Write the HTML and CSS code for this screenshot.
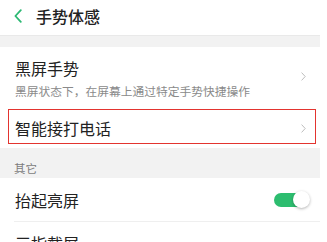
FILE: index.html
```html
<!DOCTYPE html>
<html lang="zh-CN">
<head>
<meta charset="utf-8">
<link rel="stylesheet" href="styles.css">
</head>
<body>
<div class="page">
  <header class="header">
    <svg class="back" width="8" height="14" viewBox="0 0 8 14"><path d="M6.8 1.2 L1.4 7 L6.8 12.8" fill="none" stroke="#2cb873" stroke-width="1.8" stroke-linecap="round" stroke-linejoin="round"/></svg>
    <span class="title">手势体感</span>
  </header>
  <div class="band"></div>
  <div class="item item-tall">
    <div class="texts">
      <div class="item-title">黑屏手势</div>
      <div class="item-sub">黑屏状态下，在屏幕上通过特定手势快捷操作</div>
    </div>
    <svg class="chev" width="5" height="9" viewBox="0 0 5 9"><path d="M0.6 0.6 L4.2 4.5 L0.6 8.4" fill="none" stroke="#b5b5b5" stroke-width="0.9"/></svg>
  </div>
  <div class="item item-short">
    <div class="item-title">智能接打电话</div>
    <svg class="chev" width="5" height="9" viewBox="0 0 5 9"><path d="M0.6 0.6 L4.2 4.5 L0.6 8.4" fill="none" stroke="#b5b5b5" stroke-width="0.9"/></svg>
    <div class="highlight"></div>
  </div>
  <div class="section">其它</div>
  <div class="item item-toggle">
    <div class="item-title">抬起亮屏</div>
    <div class="toggle"><div class="knob"></div></div>
  </div>
  <div class="divider"></div>
  <div class="item item-last">
    <div class="item-title">三指截屏</div>
  </div>
</div>
</body>
</html>
```
FILE: styles.css
```css
html, body {
  margin: 0;
  padding: 0;
  background: #ffffff;
}
body {
  font-family: "Noto Sans CJK SC", "Noto Sans", sans-serif;
  color: #222222;
  overflow: hidden;
  height: 242px;
}
.page {
  width: 320px;
}
.header {
  height: 35px;
  display: flex;
  align-items: center;
  padding-left: 14px;
  padding-bottom: 4px;
  box-sizing: border-box;
}
.back {
  display: block;
}
.title {
  margin-left: 14px;
  font-size: 16px;
  line-height: 20px;
  font-weight: 500;
  color: #222;
}
.band {
  height: 12px;
  background: #f2f2f2;
  border-top: 1px solid #e9e9e9;
  box-sizing: border-box;
}
.item {
  position: relative;
  display: flex;
  align-items: center;
  padding: 0 14px 0 15px;
  background: #fff;
}
.item-tall {
  height: 61px;
  align-items: flex-start;
}
.item-tall .texts {
  flex: 1;
  padding-top: 10px;
}
.item-tall .chev {
  margin-top: 25px;
}
.item-short {
  height: 40px;
}
.item-short .item-title {
  flex: 1;
  margin-top: -1px;
}
.item-title {
  font-size: 16px;
  line-height: 22px;
  color: #222;
}
.item-sub {
  font-size: 11.75px;
  line-height: 16px;
  color: #8a8a8a;
  margin-top: 4px;
  white-space: nowrap;
}
.chev {
  display: block;
  margin-right: 0;
}
.highlight {
  position: absolute;
  left: 8px;
  top: 1px;
  width: 308px;
  height: 35px;
  box-sizing: border-box;
  border: 1.5px solid #e3342f;
}
.section {
  height: 30px;
  background: #f2f2f2;
  font-size: 11.5px;
  line-height: 16px;
  color: #7d7d7d;
  padding: 12px 0 0 14px;
  box-sizing: border-box;
}
.item-toggle {
  height: 43px;
}
.item-toggle .item-title {
  flex: 1;
}
.toggle {
  position: relative;
  width: 30px;
  height: 14px;
  border-radius: 7px;
  background: #2dbd6f;
  margin-right: 2px;
}
.knob {
  position: absolute;
  right: -6px;
  top: -1.5px;
  width: 17px;
  height: 17px;
  border-radius: 50%;
  background: #fff;
  box-shadow: 0 1px 3px rgba(0,0,0,0.3);
}
.divider {
  height: 1px;
  margin-left: 14px;
  background: #efefef;
}
.item-last {
  height: 40px;
  align-items: flex-start;
  padding-top: 10px;
}
```
